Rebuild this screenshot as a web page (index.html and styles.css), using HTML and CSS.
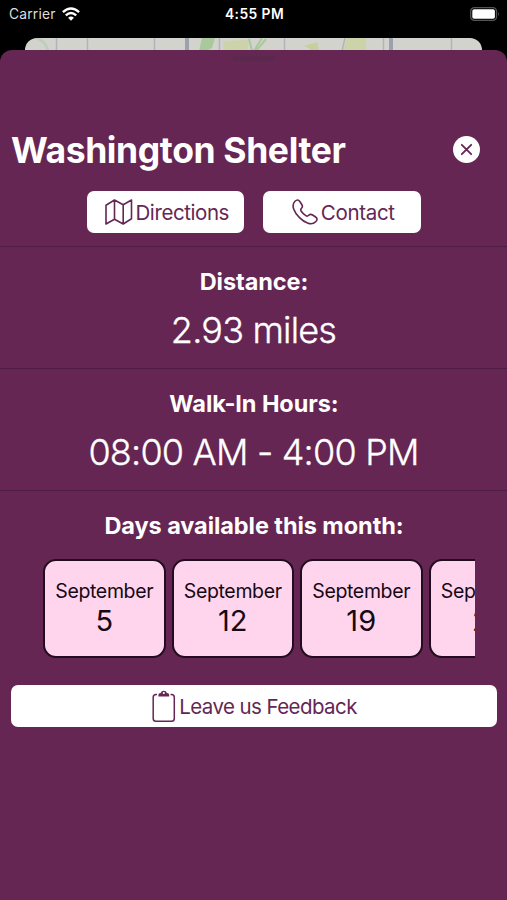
FILE: index.html
```html
<!DOCTYPE html>
<html lang="en">
<head>
<meta charset="utf-8">
<title>Washington Shelter</title>
<link rel="stylesheet" href="styles.css">
</head>
<body>
<header class="status">
  <div class="carrier"><span>Carrier</span>
    <svg width="18" height="14" viewBox="0 0 18 14" fill="none" stroke="#fff" stroke-width="2.4"><path d="M.9 5.2Q9-2.2 17.1 5.2M3.8 8.3Q9 3.7 14.2 8.3"/><path d="M6.1 10.7Q9 8.3 11.9 10.7L9 13.7Z" fill="#fff" stroke="none"/></svg>
  </div>
  <span class="time">4:55 PM</span>
  <svg class="battery" width="30" height="14" viewBox="0 0 30 14"><rect x=".7" y=".7" width="25.8" height="12.6" rx="3.6" fill="none" stroke="#555" stroke-width="1.3"/><rect x="2.3" y="2.3" width="22.6" height="9.4" rx="1.8" fill="#fff"/><path d="M28 5q1.8 2 0 4z" fill="#666"/></svg>
</header>
<div class="map">
  <svg width="457" height="26" viewBox="0 0 457 26">
    <rect width="457" height="26" fill="#d3d3ce"/>
    <path d="M12 0Q21 4 23 13" fill="none" stroke="#c0cdba" stroke-width="3"/>
    <path d="M177 0h13l-3 10-6 3h-7z" fill="#a9c99a"/>
    <path d="M198 3l25-1v11h-24z" fill="#cdd3a8"/>
    <path d="M224 1l3 12M241 1l-10 12M237 0l-8 13" stroke="#a9c99a" stroke-width="2"/>
    <path d="M279 8l13-4 2 9h-8l-2-3z" fill="#c7cf9f"/>
    <path d="M322 0h19v13h-23z" fill="#cdd3a8"/>
    <path d="M31.5 0v13M62.5 0v13M129.5 0v13M194.5 0v13M259.5 0v13M320 0l-3 13M358.5 0v13M426.5 0v13" stroke="#b2b3b9" stroke-width="1.5"/>
    <path d="M162 0v13M366 0v13" stroke="#9ca1ad" stroke-width="4"/>
  </svg>
</div>
<main class="sheet">
  <div class="grabber"></div>
  <div class="heading">
    <h1>Washington Shelter</h1>
    <button class="close" aria-label="Close"><svg width="27" height="27" viewBox="0 0 27 27"><path d="M8.800 8.800l9.400 9.400M18.200 8.800l-9.400 9.400" stroke="#652653" stroke-width="1.800" stroke-linecap="round"/></svg></button>
  </div>
  <div class="actions">
    <button class="button directions">
      <svg width="28" height="26" viewBox="0 0 28 26" fill="none" stroke="#652653" stroke-width="1.600" stroke-linejoin="round"><path d="M1 6.200L9.500 1 18.200 5.800 26.500 1v18.800L18.200 25 9.500 20.200 1 25zM9.500 1v19.200M18.200 5.800V25"/></svg><span>Directions</span>
    </button>
    <button class="button contact">
      <svg width="26" height="26" viewBox="0 0 26 26" fill="none" stroke="#652653" stroke-width="1.600" stroke-linejoin="round"><path d="M3 2.300C4.800.5 6.500.6 7.800 2.500l2 3c1 1.500.9 2.600-.3 3.800-1 1-1.200 1.500-.4 2.700 1.200 1.800 2.900 3.500 4.700 4.700 1.200.8 1.900.6 2.900-.4 1.200-1.200 2.400-1.300 3.900-.3l3 2c1.900 1.300 1.900 3 .1 4.800-4.200 4.200-10.800 1.200-16.200-4.200S-1.200 6.500 3 2.300z"/></svg><span>Contact</span>
    </button>
  </div>
  <section class="row"><h2>Distance:</h2><p class="miles">2.93 miles</p></section>
  <section class="row"><h2>Walk-In Hours:</h2><p class="hours">08:00 AM - 4:00 PM</p></section>
  <section class="row days"><h2>Days available this month:</h2>
    <div class="cards">
      <div class="card"><span class="month">September</span><span class="day">5</span></div>
      <div class="card"><span class="month">September</span><span class="day">12</span></div>
      <div class="card"><span class="month">September</span><span class="day">19</span></div>
      <div class="card"><span class="month">September</span><span class="day">26</span></div>
    </div>
  </section>
  <button class="button feedback">
    <svg width="24" height="33" viewBox="0 0 24 33" fill="none" stroke="#652653" stroke-width="1.500"><path d="M5 4.500H4Q1.200 4.500 1.200 7.300V28.500Q1.200 31.300 4 31.300H19.500Q22.300 31.300 22.300 28.500V7.300Q22.300 4.500 19.500 4.500H18.500"/><path d="M6.400 6.500V5Q6.400 3.300 8.700 3.100A3.200 3.200 0 0 1 14.900 3.100Q17.200 3.300 17.200 5V6.500Z" fill="#652653" stroke="none"/><circle cx="11.800" cy="3" r="1.100" fill="#fff" stroke="none"/></svg><span>Leave us Feedback</span>
  </button>
</main>
</body>
</html>
```
FILE: styles.css
```css
* { box-sizing: border-box; }
body { margin: 0; height: 900px; overflow: hidden; background: #000; font-family: Inter, sans-serif; color: #fff; }
h1, h2, p { margin: 0; }
button { border: 0; padding: 0; font: inherit; }
svg { display: block; flex: none; }
h1, span { white-space: nowrap; }
.status { height: 38px; padding: 0 7px 10px 9px; display: grid; grid-template-columns: 1fr auto 1fr; align-items: center; font-size: 13.8px; }
.carrier { display: flex; align-items: center; gap: 6px; letter-spacing: .2px; color: #ddd; }
.time { font-weight: 600; letter-spacing: .45px; }
.battery { justify-self: end; }
.map { height: 12px; margin: 0 25px; border-radius: 12px 12px 0 0; overflow: hidden; }
.sheet { height: 850px; background: #652653; border-radius: 12px 12px 0 0; }
.grabber { width: 42px; height: 5px; margin: 0 auto; border-radius: 3px; background: #5b294e; transform: translateY(6px); }
.heading { height: 86px; margin-top: 50px; display: flex; justify-content: space-between; padding: 26px 27px 0 11px; }
h1 { font-size: 35.5px; line-height: 40px; font-weight: 700; letter-spacing: -.38px; }
.close { width: 27px; height: 27px; margin-top: 5px; border-radius: 50%; background: #fff; }
.actions { display: flex; justify-content: center; gap: 19px; height: 55px; }
.button { display: flex; align-items: center; justify-content: center; height: 42px; border-radius: 7px; background: #fff; color: #652653; font-size: 20.5px; line-height: 26px; }
.button span { padding-top: 1px; }
.actions .button { width: 157.5px; padding-left: 3px; gap: 3px; }
.directions { letter-spacing: -.42px; }
.contact { letter-spacing: -.3px; }
.row { height: 122px; border-top: 1px solid #4e1d41; text-align: center; padding-top: 20px; }
h2 { font-size: 23.5px; line-height: 30px; font-weight: 700; letter-spacing: -.07px; padding-left: 1px; }
.row p { margin-top: 10px; font-size: 36px; line-height: 46px; font-weight: 300; -webkit-text-stroke: .35px #fff; }
.miles { letter-spacing: -.8px; }
.hours { letter-spacing: -.8px; }
.days { height: 193px; }
.cards { display: flex; gap: 6px; margin: 18px 32px 0 43px; overflow: hidden; }
.card { flex: 0 0 122.5px; height: 99px; border: 2px solid #220c20; border-radius: 13px; background: #ffd5ed; color: #160916; display: flex; flex-direction: column; align-items: center; padding-top: 17px; }
.month { font-size: 19.5px; line-height: 27px; letter-spacing: -.35px; }
.day { font-size: 29px; line-height: 31px; }
.feedback { width: 486px; margin: 2px 0 0 11px; padding-left: 1px; gap: 3px; letter-spacing: -.58px; }
```
